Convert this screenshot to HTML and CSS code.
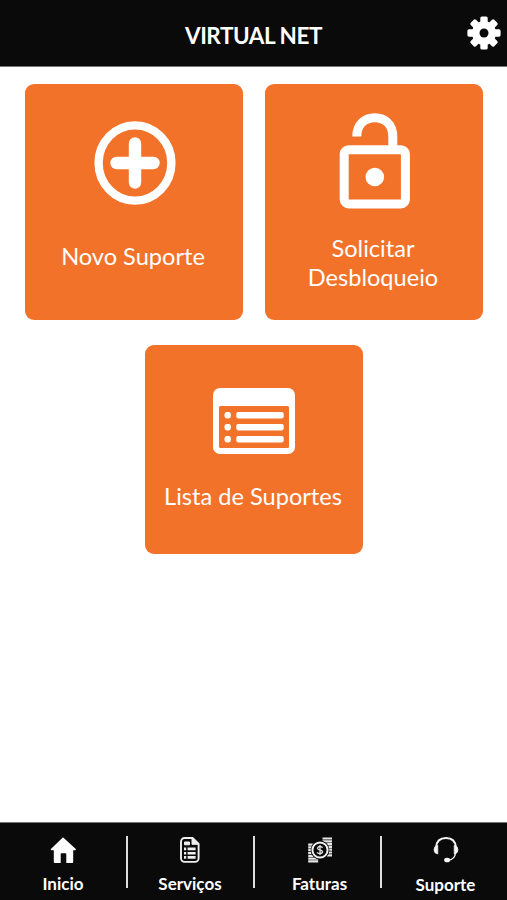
FILE: index.html
```
<!DOCTYPE html>
<html lang="pt-BR">
<head>
    <meta charset="UTF-8">
    <meta name="viewport" content="width=device-width, initial-scale=1.0">
    <title>Virtual Net</title>
    <link rel="stylesheet" href="styles.css">
</head>
<body>

<header class="topbar">
    <h1 class="title">VIRTUAL NET</h1>
    <svg class="gear" width="34" height="34" viewBox="-17 -17 34 34">
        <g fill="#fff">
            <rect x="-3.7" y="-16.6" width="7.4" height="33.2" rx="1.6"/>
            <rect x="-3.7" y="-16.6" width="7.4" height="33.2" rx="1.6" transform="rotate(45)"/>
            <rect x="-3.7" y="-16.6" width="7.4" height="33.2" rx="1.6" transform="rotate(90)"/>
            <rect x="-3.7" y="-16.6" width="7.4" height="33.2" rx="1.6" transform="rotate(135)"/>
            <circle r="12"/>
        </g>
        <circle r="4.5" fill="#0a0a0a"/>
    </svg>
</header>

<main class="cards">
    <a class="card card-new">
        <svg width="82" height="84" viewBox="0 0 82 84" fill="none" stroke="#fff">
            <ellipse cx="41" cy="42" rx="36.4" ry="37.6" stroke-width="8.4"/>
            <path d="M41 22.5v39M22.5 42h37" stroke-width="12.4" stroke-linecap="round"/>
        </svg>
        <span class="card-label">Novo Suporte</span>
    </a>
    <a class="card card-unlock">
        <svg width="72" height="96" viewBox="0 0 72 96" fill="none" stroke="#fff">
            <rect x="5.2" y="36.7" width="61.2" height="54.2" rx="4.5" stroke-width="9"/>
            <path d="M17.8 23.5C17.8 11.5 25.5 4.7 35.8 4.7S53.8 11.5 53.8 23.5V35" stroke-width="9"/>
            <circle cx="35.8" cy="64" r="9.3" fill="#fff" stroke="none"/>
        </svg>
        <span class="card-label">Solicitar<br>Desbloqueio</span>
    </a>
    <a class="card card-list">
        <svg width="82" height="66" viewBox="0 0 82 66">
            <rect width="82" height="66" rx="7" fill="#fff"/>
            <rect x="6" y="18" width="70" height="42" rx="1.5" fill="#f27229"/>
            <g fill="#fff">
                <rect x="11.5" y="24" width="6.4" height="6.4" rx="2.4"/>
                <rect x="11.5" y="36" width="6.4" height="6.4" rx="2.4"/>
                <rect x="11.5" y="48" width="6.4" height="6.4" rx="2.4"/>
                <rect x="23.3" y="24" width="47.4" height="6.4" rx="1.8"/>
                <rect x="23.3" y="36" width="47.4" height="6.4" rx="1.8"/>
                <rect x="23.3" y="48" width="47.4" height="6.4" rx="1.8"/>
            </g>
        </svg>
        <span class="card-label label-list">Lista de Suportes</span>
    </a>
</main>

<nav class="tabbar">
    <a class="tab">
        <svg width="28" height="28" viewBox="0 0 28 28" fill="#fff">
            <path d="M14.5 1.7 26.8 13Q27.3 14.3 26 14.3H24.2V26Q24.2 27 23.2 27H17.3V18Q17.3 17.2 16.5 17.2H12.5Q11.7 17.2 11.7 18V27H5.8Q4.8 27 4.8 26V14.3H2.6Q1.3 14.3 1.9 13L13.5 1.7Q14 1.2 14.5 1.7Z"/>
        </svg>
        <span class="tab-label">Inicio</span>
    </a>
    <span class="divider"></span>
    <a class="tab tab-services">
        <svg width="28" height="28" viewBox="0 0 28 28" fill="none" stroke="#eee">
            <path d="M8.6 2h8l6 6v14.3a3.6 3.6 0 0 1-3.6 3.6H8.6A3.6 3.6 0 0 1 5 22.300V5.600A3.600 3.600 0 0 1 8.600 2Z" stroke-width="1.9"/>
            <path d="M16 2v6.3h6.500Z" fill="#eee"/>
            <path d="M8.500 6h5v2.800h-5Z" fill="#eee" stroke-width="1"/>
            <path d="M8 12.900h2.200M8 17.200h2.200M8 21.400h2.200M11.600 12.900h8M11.600 17.200h8M11.600 21.400h8" stroke-width="2.600"/>
        </svg>
        <span class="tab-label">Serviços</span>
    </a>
    <span class="divider"></span>
    <a class="tab tab-bills">
        <svg width="28" height="28" viewBox="0 0 28 28">
            <path d="M16.500 2.500H26M16.500 5.300h9.500M17 8.100h9M21 10.900h5M22 13.700h4M22 16.500h4M21 19.300h5M2.200 8.600h8M2.200 11.400H7M2.200 14.200H7M2.200 17H7M2.200 19.800h8M2.200 22.600h10M2.200 25.400h10" fill="none" stroke="#e6e6e6" stroke-width="2.200"/>
            <circle cx="14" cy="14" r="9.400" fill="#0a0a0a"/>
            <circle cx="14" cy="14" r="7.600" fill="none" stroke="#f2f2f2" stroke-width="2"/>
            <path d="M16.600 11.700Q16 10.500 14 10.500T11.500 12.200Q11.500 13.500 14 14T16.600 15.800Q16.600 17.500 14 17.500T11.300 16.200M14 9v10" fill="none" stroke="#ddd" stroke-width="1.300"/>
        </svg>
        <span class="tab-label">Faturas</span>
    </a>
    <span class="divider"></span>
    <a class="tab tab-support">
        <svg width="28" height="28" viewBox="0 0 28 28" fill="none" stroke="#f4f4f4">
            <path d="M4 11.500C4.500 5 8.600 2 14 2S23.500 5 24 11.500" stroke-width="1.900"/>
            <path d="M23.500 17C23 21.500 20.500 23.700 16.500 24.200" stroke-width="1.400"/>
            <path d="M5.800 9.400V18Q2 17.500 2 13.700T5.800 9.400ZM22.200 9.400V18Q26 17.500 26 13.700T22.200 9.400Z" fill="#f4f4f4" stroke-width=".7"/>
            <ellipse cx="15.100" cy="24" rx="3" ry="2.300" fill="#f4f4f4" stroke="none"/>
        </svg>
        <span class="tab-label">Suporte</span>
    </a>
</nav>

</body>
</html>
```
FILE: styles.css
```
* {
    box-sizing: border-box;
}
body {
    margin: 0;
    height: 900px;
    display: flex;
    flex-direction: column;
    background-color: #fff;
    color: #fff;
    font-family: Lato, "Liberation Sans", sans-serif;
    overflow: hidden;
}
.topbar {
    height: 67px;
    display: grid;
    grid-template-columns: 1fr auto 1fr;
    align-items: center;
    background-color: #0a0a0a;
    border-bottom: 1px solid #777;
}
.title {
    grid-column: 2;
    margin: 5px 0 0;
    font-size: 22.5px;
    line-height: 28px;
    font-weight: bold;
    letter-spacing: -0.45px;
}
.gear {
    justify-self: end;
    margin-right: 6px;
}
/* Cards */
.cards {
    flex: 1;
    display: flex;
    flex-wrap: wrap;
    justify-content: center;
    align-content: flex-start;
    gap: 25px 22px;
    padding: 17px 0 0 1px;
}
.card {
    width: 218px;
    height: 236px;
    display: flex;
    flex-direction: column;
    align-items: center;
    background-color: #f27229;
    border-radius: 9px;
}
.card-new {
    padding: 37px 0 0 2px;
    gap: 37px;
}
.card-unlock {
    padding: 29px 0 0 2px;
    gap: 25px;
}
.card-list {
    height: 209px;
    padding-top: 43px;
    gap: 28px;
}
.card-label {
    font-size: 23.6px;
    line-height: 29px;
    text-align: center;
    margin-right: 4px;
}
.label-list {
    margin-right: 2px;
}
/* Bottom navigation */
.tabbar {
    height: 78px;
    display: flex;
    background-color: #0a0a0a;
    border-top: 1px solid #777;
}
.tab {
    width: 125px;
    display: flex;
    flex-direction: column;
    align-items: center;
    padding-top: 13px;
    gap: 9px;
}
.tab:first-child {
    width: 126px;
}
.tab-label {
    font-size: 17px;
    line-height: 22px;
    font-weight: bold;
}
.tab-services {
    padding-right: 1px;
}
.tab-bills {
    padding-left: 4px;
}
.tab-support {
    padding-left: 2px;
}
.tab-support .tab-label {
    margin-top: 1px;
}
.divider {
    width: 2px;
    height: 52px;
    margin-top: 13px;
    background-color: #ddd;
}
```
